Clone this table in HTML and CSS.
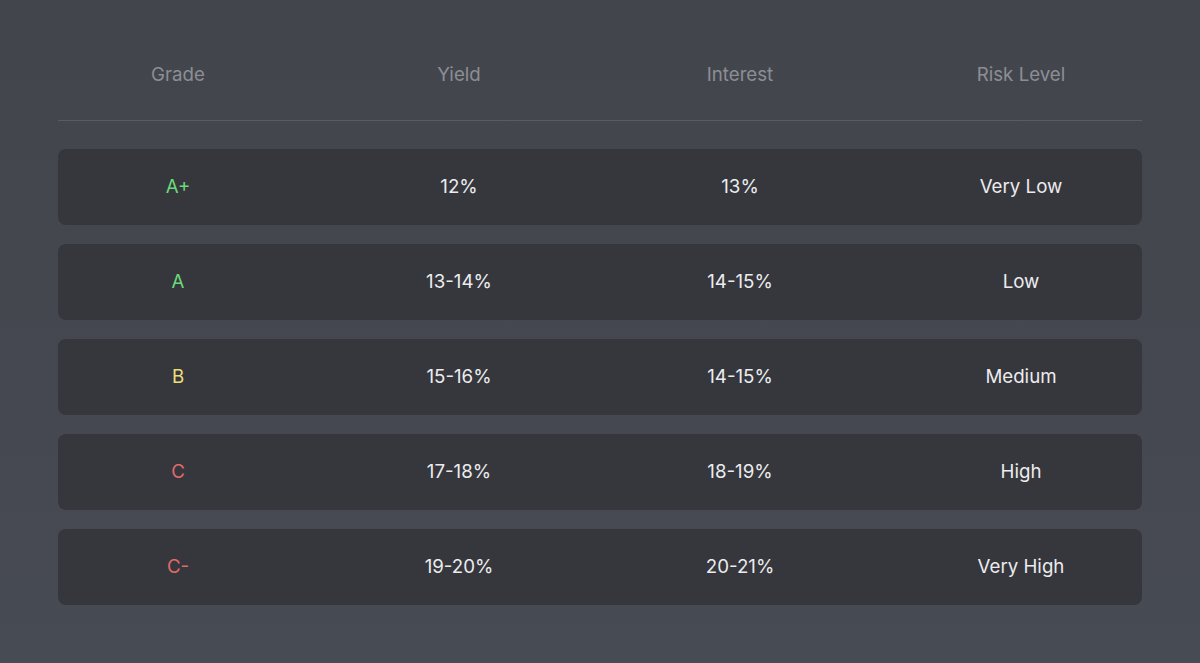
FILE: index.html
```html
<!DOCTYPE html>
<html lang="en">
<head>
<meta charset="utf-8">
<title>Grades</title>
<link rel="stylesheet" href="styles.css">
</head>
<body>
<main class="page">
  <div class="table">
    <div class="head">
      <div class="cell">Grade</div>
      <div class="cell">Yield</div>
      <div class="cell">Interest</div>
      <div class="cell">Risk Level</div>
    </div>
    <div class="rows">
      <div class="row">
        <div class="cell grade green">A+</div>
        <div class="cell">12%</div>
        <div class="cell">13%</div>
        <div class="cell">Very Low</div>
      </div>
      <div class="row">
        <div class="cell grade green">A</div>
        <div class="cell">13-14%</div>
        <div class="cell">14-15%</div>
        <div class="cell">Low</div>
      </div>
      <div class="row">
        <div class="cell grade yellow">B</div>
        <div class="cell">15-16%</div>
        <div class="cell">14-15%</div>
        <div class="cell">Medium</div>
      </div>
      <div class="row">
        <div class="cell grade red">C</div>
        <div class="cell">17-18%</div>
        <div class="cell">18-19%</div>
        <div class="cell">High</div>
      </div>
      <div class="row">
        <div class="cell grade red">C-</div>
        <div class="cell">19-20%</div>
        <div class="cell">20-21%</div>
        <div class="cell">Very High</div>
      </div>
    </div>
  </div>
</main>
</body>
</html>
```

FILE: styles.css
```css
* { box-sizing: border-box; }
html, body {
  margin: 0;
  height: 100%;
}
body {
  background: linear-gradient(180deg, #43454c 0%, #454850 60%, #474b53 100%);
  font-family: "Inter", "Liberation Sans", sans-serif;
  overflow: hidden;
}
.page {
  padding: 0 58px;
}
.table {
  width: 1084px;
}
.head, .row {
  display: grid;
  grid-template-columns: repeat(4, 240px);
  column-gap: 41px;
  align-items: center;
}
.head {
  height: 121px;
  border-bottom: 1px solid #5a5b63;
  color: #8c8e95;
  font-size: 18.7px;
}
.head .cell {
  padding-top: 29px;
}
.cell {
  text-align: center;
  line-height: 22px;
}
.rows {
  display: flex;
  flex-direction: column;
  gap: 19px;
  padding-top: 28px;
}
.row {
  height: 76px;
  background: #36373d;
  border-radius: 8px;
  color: #ececee;
  font-size: 18.7px;
}
.green { color: #6bd97a; }
.yellow { color: #ecdf7a; }
.red { color: #e26a6c; }
```
